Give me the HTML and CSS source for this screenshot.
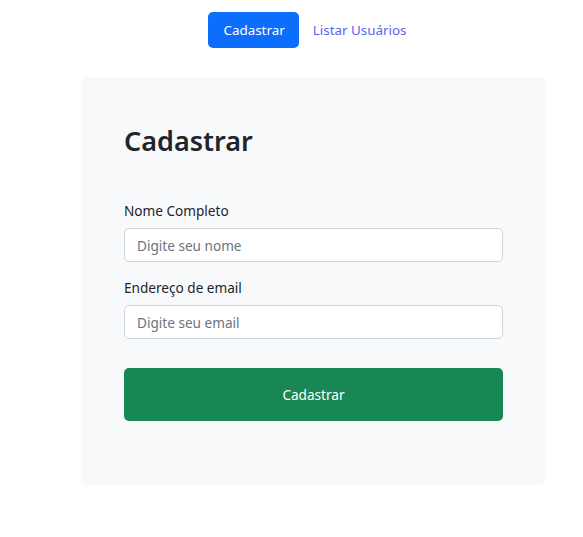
FILE: index.html
```html
<!DOCTYPE html>
<html lang="pt-BR">
<head>
<meta charset="utf-8">
<title>Cadastrar</title>
<link rel="stylesheet" href="styles.css">
</head>
<body>
<div class="wrap">
  <nav class="nav">
    <a class="nav-link active" href="#">Cadastrar</a>
    <a class="nav-link" href="#">Listar Usuários</a>
  </nav>
  <main class="card">
    <h1 class="title">Cadastrar</h1>
    <form class="form">
      <div class="field">
        <label class="label" for="nome">Nome Completo</label>
        <input class="input" id="nome" type="text" placeholder="Digite seu nome">
      </div>
      <div class="field">
        <label class="label" for="email">Endereço de email</label>
        <input class="input" id="email" type="email" placeholder="Digite seu email">
      </div>
      <button class="btn" type="button">Cadastrar</button>
    </form>
  </main>
</div>
</body>
</html>
```
FILE: styles.css
```css
* { box-sizing: border-box; }
html, body { margin: 0; background: #fff; }
body {
  font-family: "Noto Sans", "Open Sans", sans-serif;
  color: #212529;
  font-size: 13.6px;
}
.wrap {
  margin-left: 81px;
  width: 465px;
  padding-top: 12px;
}
.nav {
  display: flex;
  justify-content: center;
  padding-left: 2px;
}
.nav-link {
  display: block;
  height: 36px;
  line-height: 37px;
  padding: 0 14px;
  font-size: 13.4px;
  color: #5b64f0;
  text-decoration: none;
  border-radius: 5px;
}
.nav-link.active {
  background: #0d6efd;
  color: #fff;
  padding: 0 14px 0 15px;
}
.card {
  margin-top: 29px;
  background: #f8f9fa;
  border-radius: 5px;
  padding: 43px 43px 64px 43px;
  height: 408px;
}
.title {
  margin: 0;
  font-size: 27px;
  font-weight: 600;
  line-height: 36px;
  padding-top: 3px;
}
.form {
  margin-top: 42px;
  display: flex;
  flex-direction: column;
}
.field {
  display: flex;
  flex-direction: column;
  margin-bottom: 16px;
}
.label {
  font-size: 13.6px;
  line-height: 20px;
  margin-bottom: 7px;
}
.input {
  height: 34px;
  border: 1px solid #ced4da;
  border-radius: 5px;
  padding: 0 12px;
  font: inherit;
  font-size: 13.6px;
  color: #212529;
  background: #fff;
}
.input::placeholder { color: #6c757d; }
.btn {
  margin-top: 13px;
  height: 53px;
  border: none;
  border-radius: 5px;
  background: #198754;
  color: #fff;
  font: inherit;
  font-size: 13.6px;
}
```
